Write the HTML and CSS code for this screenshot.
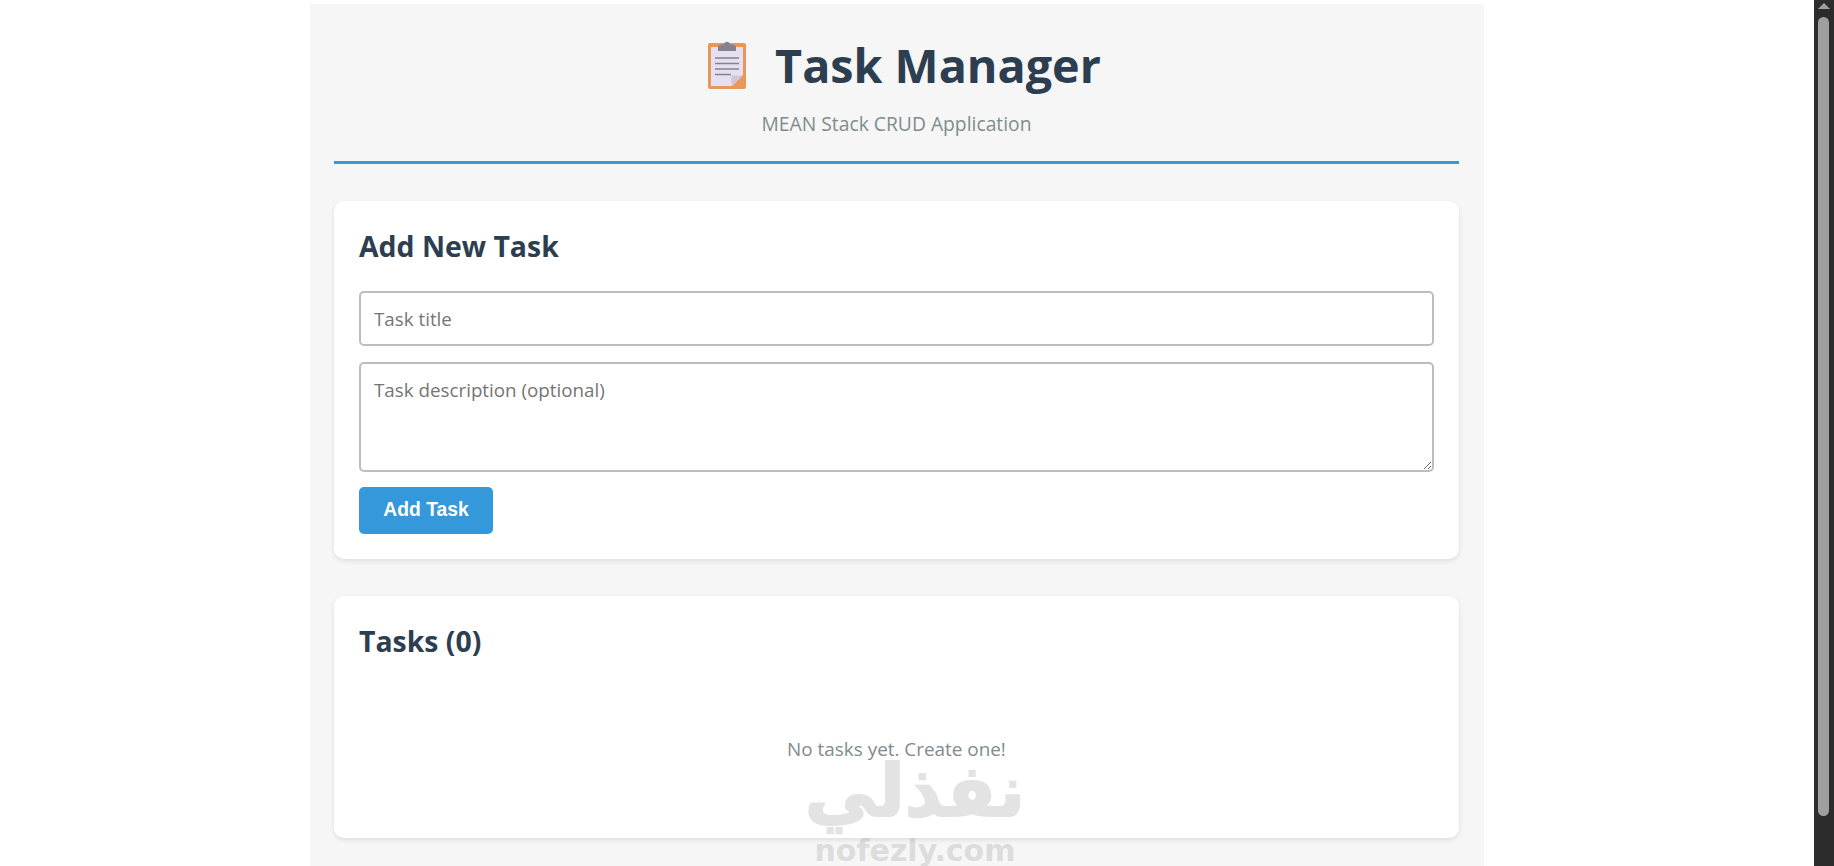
FILE: index.html
```html
<!DOCTYPE html>
<html lang="en">
<head>
<meta charset="utf-8">
<title>Task Manager</title>
<link rel="stylesheet" href="styles.css">
</head>
<body>
<div class="page">
  <main class="container">
    <header class="header">
      <h1 class="title">
        <svg class="emoji" viewBox="0 0 38 48" aria-hidden="true">
          <rect x="0" y="2" width="38" height="46" rx="2" fill="#e8975a"/>
          <path d="M3 6h32v28L24 45H3z" fill="#e6dff0"/>
          <path d="M35 34 24 45c-1-4-1-8 0-11 4 1 7 1 11 0z" fill="#cfc6de"/>
          <path d="M10 6c0-2 3-2 6-3 1-3 5-3 6 0 3 1 6 1 6 3v4H10z" fill="#86808f"/>
          <path d="M7 17h24M7 22.500h24M7 28h24M7 33.500h16" stroke="#86808f" stroke-width="1.300"/>
        </svg>
        <span>Task Manager</span>
      </h1>
      <p class="subtitle">MEAN Stack CRUD Application</p>
    </header>

    <section class="card form-card">
      <h2 class="card-title">Add New Task</h2>
      <input class="field" type="text" placeholder="Task title">
      <textarea class="field area" placeholder="Task description (optional)"></textarea>
      <button class="btn" type="button">Add Task</button>
    </section>

    <section class="card list-card">
      <h2 class="card-title">Tasks (0)</h2>
      <p class="empty">No tasks yet. Create one!</p>
    </section>
  </main>

  <aside class="scrollbar" aria-hidden="true">
    <div class="arrow"></div>
    <div class="thumb"></div>
  </aside>
</div>

<div class="watermark">
  <div class="wm-ar" dir="rtl">نفذلي</div>
  <div class="wm-en">nofezly.com</div>
</div>
</body>
</html>
```
FILE: styles.css
```css
* { box-sizing: border-box; }
html, body { margin: 0; height: 866px; overflow: hidden; background: #fff; }
body { font-family: "Open Sans", "Noto Sans", sans-serif; color: #2c3e50; }

.page { display: flex; height: 866px; overflow: hidden; }

.container {
  width: 1174px;
  height: 900px;
  margin: 4px 330px 0 310px;
  padding: 0 25px 0 24px;
  background: #f6f6f7;
  flex: none;
}

.header {
  height: 160px;
  padding-top: 30px;
  border-bottom: 3px solid #3498db;
  text-align: center;
}
.title {
  margin: 0;
  height: 62px;
  padding-left: 16px;
  display: flex;
  justify-content: center;
  align-items: center;
  gap: 29px;
  font-size: 46.700px;
  font-weight: 700;
  line-height: 62px;
  color: #2c3e50;
}
.emoji { width: 38px; height: 48px; flex: none; }
.subtitle { margin: 16px 0 0; font-size: 19.300px; line-height: 24px; color: #7f8c8d; }

.card {
  background: #fff;
  border-radius: 10px;
  box-shadow: 0 2px 5px rgba(0, 0, 0, 0.1);
  padding: 25px;
}
.form-card { margin-top: 37px; height: 358px; display: flex; flex-direction: column; align-items: flex-start; }
.list-card { margin-top: 37px; height: 242px; }

.card-title { margin: 0; padding-top: 1px; font-size: 28.400px; line-height: 39px; font-weight: 700; color: #2c3e50; }

.field {
  display: block;
  width: 100%;
  height: 55px;
  margin-top: 25px;
  padding: 0 13px;
  border: 2px solid #bdbdbd;
  border-radius: 5px;
  background: #fff;
  font: 18.800px "Open Sans", sans-serif;
  color: #2c3e50;
}
.field::placeholder { color: #757575; opacity: 1; }
.area { height: 110px; margin-top: 16px; padding-top: 13px; resize: vertical; }

.btn {
  margin-top: 15px;
  width: 134px;
  height: 47px;
  padding-bottom: 2px;
  border: 0;
  border-radius: 5px;
  background: #3498db;
  color: #fff;
  font: 700 19.300px "Liberation Sans", sans-serif;
}

.empty { margin: 76px 0 0; text-align: center; font-size: 18.900px; line-height: 24px; color: #7f8c8d; }

.scrollbar { position: absolute; top: 0; right: 0; width: 20px; height: 866px; background: #2c2c2c; }
.arrow {
  position: absolute; left: 4px; top: 3px;
  border-left: 6px solid transparent; border-right: 6px solid transparent;
  border-bottom: 6px solid #9f9f9f;
}
.thumb { position: absolute; left: 4px; top: 17px; width: 11px; height: 799px; background: #9f9f9f; border-radius: 6px; }

.watermark { position: absolute; left: 800px; top: 745px; width: 230px; text-align: center; pointer-events: none; color: #787878; opacity: 0.2; }
.wm-ar { font: 700 72px/92px "DejaVu Sans", sans-serif; -webkit-text-stroke: 2px #787878; }
.wm-en { font: 700 30px/28px "DejaVu Sans", sans-serif; }
```
